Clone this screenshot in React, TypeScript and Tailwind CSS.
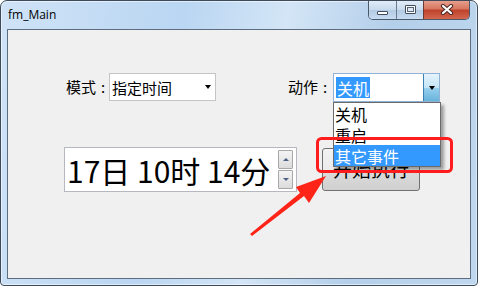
const cjk = { fontFamily: '"Noto Sans CJK SC", "Noto Sans", sans-serif' };

const TitleButtons = () => (
  <div className="ml-auto mr-[7px] -mt-px flex h-[20px] w-[102px] overflow-hidden rounded-b-[5px] border border-t-0 border-[#4b5a6b]">
    <div className="flex w-[27px] items-end justify-center bg-[linear-gradient(180deg,#e4eef9_0%,#c9dbee_50%,#b3c9e2_51%,#c7dcf1_100%)] pb-[4px]">
      <div className="h-[4px] w-[11px] rounded-[1px] border border-[#3d4b5c] bg-white" />
    </div>
    <div className="flex w-[27px] items-center justify-center border-l border-[#6a7b8f] bg-[linear-gradient(180deg,#e4eef9_0%,#c9dbee_50%,#b3c9e2_51%,#c7dcf1_100%)]">
      <div className="h-[9px] w-[11px] rounded-[1px] border border-[#3d4b5c] bg-white p-[1px]">
        <div className="h-full w-full border border-[#55657a] bg-[#dfe9f4]" />
      </div>
    </div>
    <div className="flex flex-1 items-center justify-center border-l border-[#6b3a34] bg-[linear-gradient(180deg,#e8a493_0%,#d77862_45%,#c0432c_55%,#d2664f_100%)]">
      <svg width="14" height="11" viewBox="0 0 14 11">
        <path d="M3 2 L11 9 M11 2 L3 9" stroke="#4a2a24" strokeWidth="4.2" strokeLinecap="round" />
        <path d="M3 2 L11 9 M11 2 L3 9" stroke="#ffffff" strokeWidth="2.2" strokeLinecap="round" />
      </svg>
    </div>
  </div>
);

const Arrow = () => (
  <div className="w-0 h-0 border-l-[3.5px] border-r-[3.5px] border-t-[4px] border-l-transparent border-r-transparent border-t-black" />
);

export default function App() {
  return (
    <div className="relative h-[286px] w-[478px] overflow-hidden rounded-t-[7px] rounded-b-[4px] border border-[#3c4a59] bg-[linear-gradient(100deg,#cfe3f7_0%,#bad6f2_35%,#d3e5f6_55%,#b4cfea_75%,#c0d8ef_100%)] shadow-[inset_0_0_0_1px_rgba(255,255,255,0.55)]" style={cjk}>
      <div className="flex h-[28px] items-start">
        <div className="pl-[7px] pt-[5px] text-[12px] leading-[18px] text-black" style={{ fontFamily: '"Open Sans", "Noto Sans", sans-serif' }}>
          fm_Main
        </div>
        <TitleButtons />
      </div>

      <div className="ml-[6px] h-[250px] w-[464px] border border-[#5d6d80] bg-[#f0f0f0]">
        <div className="mt-[43px] flex items-start">
          <div className="ml-[58px] flex h-[28px] w-[43px] items-center text-[15px] text-black">
            模式<span className="ml-[5px]">:</span>
          </div>
          <div className="flex h-[28px] w-[107px] items-center border border-[#c5c5c5] bg-white pl-[2px] pr-[4px]">
            <span className="text-[15px] leading-none text-black">指定时间</span>
            <span className="ml-auto"><Arrow /></span>
          </div>
          <div className="ml-[72px] flex h-[29px] w-[45px] items-center text-[15px] text-black">
            动作<span className="ml-[5px]">:</span>
          </div>
          <div className="relative flex h-[29px] w-[107px] items-stretch border border-[#8fb2d6] bg-white">
            <div className="flex flex-1 items-center pl-[2px]">
              <span className="flex h-[21px] items-center bg-[#3399ff] px-[1px] text-[16px] leading-none text-white">关机</span>
            </div>
            <div className="flex w-[16px] items-center justify-center border-l border-[#3c7fb1] bg-[linear-gradient(180deg,#e5f3fd_0%,#c4e5f6_50%,#98d1ef_51%,#68b3db_100%)]">
              <Arrow />
            </div>
            <div className="absolute left-[-1px] top-[28px] z-10 w-[108px] border border-[#6b6b6b] bg-white shadow-[3px_3px_3px_rgba(0,0,0,0.35)]">
              <div className="flex h-[21px] items-center pl-[1px] text-[16px] text-black">关机</div>
              <div className="flex h-[21px] items-center pl-[1px] text-[16px] text-black">重启</div>
              <div className="flex h-[21px] items-center bg-[#3399ff] pl-[1px] text-[16px] text-white">其它事件</div>
            </div>
          </div>
        </div>

        <div className="mt-[45px] flex items-start">
          <div className="ml-[56px] flex h-[45px] w-[233px] items-center border border-[#b5b8bf] bg-white pl-[2px] pr-[3px]">
            <span className="text-[30px] leading-none text-black">17日 10时 14分</span>
            <div className="ml-auto flex flex-col gap-[1px]">
              <div className="flex h-[19px] w-[15px] items-center justify-center rounded-[1px] border border-[#a7a7a7] bg-[linear-gradient(180deg,#f4f4f4,#dcdcdc)]">
                <div className="h-0 w-0 border-b-[3px] border-l-[3px] border-r-[3px] border-b-[#4d6185] border-l-transparent border-r-transparent" />
              </div>
              <div className="flex h-[19px] w-[15px] items-center justify-center rounded-[1px] border border-[#a7a7a7] bg-[linear-gradient(180deg,#f4f4f4,#dcdcdc)]">
                <div className="h-0 w-0 border-t-[3px] border-l-[3px] border-r-[3px] border-t-[#4d6185] border-l-transparent border-r-transparent" />
              </div>
            </div>
          </div>
          <div className="ml-[25px] mt-px flex h-[43px] w-[98px] items-center justify-center rounded-[3px] border border-[#707070] bg-[linear-gradient(180deg,#f2f2f2_0%,#ebebeb_50%,#dddddd_51%,#cfcfcf_100%)] text-[19px] text-black">
            开始执行
          </div>
        </div>
      </div>

      <svg className="pointer-events-none absolute left-[-1px] top-[-1px] z-20" width="478" height="286" viewBox="0 0 478 286">
        <rect x="317.5" y="138.5" width="134" height="33" rx="4" fill="none" stroke="#ff1c1c" strokeWidth="3" />
        <polygon points="250,234 300,193 296,187 326,176 309,203 304,196 252,236" fill="#ff2418" />
      </svg>
    </div>
  );
}
